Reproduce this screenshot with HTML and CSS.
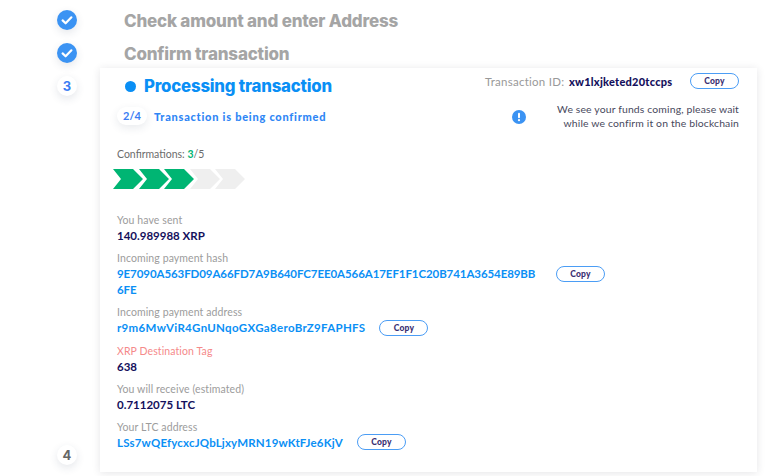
FILE: index.html
```html
<!DOCTYPE html>
<html lang="en">
<head>
  <meta charset="UTF-8" />
  <title>Processing transaction</title>
  <link rel="stylesheet" href="styles.css">
</head>
<body>

  <!-- Finished steps -->
  <div class="step-row">
    <div class="rail">
      <span class="badge badge-done">
        <svg viewBox="0 0 20 20" width="20" height="20"><path d="M5.6 10.4l3 2.9 5.8-6" fill="none" stroke="#fff" stroke-width="2.2" stroke-linecap="round" stroke-linejoin="round"/></svg>
      </span>
    </div>
    <h2 class="step-title">Check amount and enter Address</h2>
  </div>
  <div class="step-row">
    <div class="rail">
      <span class="badge badge-done">
        <svg viewBox="0 0 20 20" width="20" height="20"><path d="M5.6 10.4l3 2.9 5.8-6" fill="none" stroke="#fff" stroke-width="2.2" stroke-linecap="round" stroke-linejoin="round"/></svg>
      </span>
    </div>
    <h2 class="step-title">Confirm transaction</h2>
  </div>

  <!-- Current step -->
  <div class="current">
    <div class="rail rail-long">
      <span class="badge badge-num">3</span>
      <span class="badge badge-num badge-next">4</span>
    </div>

    <div class="card">
      <div class="card-top">
        <div class="card-left">
          <h1 class="title"><span class="dot"></span>Processing transaction</h1>
          <div class="stage">
            <span class="stage-num">2/4</span>
            <span class="stage-text">Transaction is being confirmed</span>
          </div>
        </div>
        <div class="card-right">
          <div class="tx-id">
            <span class="tx-label">Transaction ID:</span>
            <span class="tx-value">xw1lxjketed20tccps</span>
            <button class="copy">Copy</button>
          </div>
          <div class="notice">
            <svg class="notice-icon" viewBox="0 0 14 14" width="14" height="14"><circle cx="7" cy="7" r="7" fill="#3b93f3"/><rect x="6" y="2.8" width="2" height="5.4" rx="1" fill="#fff"/><circle cx="7" cy="10.2" r="1.1" fill="#fff"/></svg>
            <p>We see your funds coming, please wait<br>while we confirm it on the blockchain</p>
          </div>
        </div>
      </div>

      <div class="confirmations">Confirmations: <b>3</b>/5</div>
      <div class="chevrons">
        <svg viewBox="0 0 30 20" width="30" height="20"><polygon class="on" points="0,0 20,0 30,10 20,20 0,20 8,10"/></svg>
        <svg viewBox="0 0 30 20" width="30" height="20"><polygon class="on" points="0,0 20,0 30,10 20,20 0,20 8,10"/></svg>
        <svg viewBox="0 0 30 20" width="30" height="20"><polygon class="on" points="0,0 20,0 30,10 20,20 0,20 8,10"/></svg>
        <svg viewBox="0 0 30 20" width="30" height="20"><polygon points="0,0 20,0 30,10 20,20 0,20 8,10"/></svg>
        <svg viewBox="0 0 30 20" width="30" height="20"><polygon points="0,0 20,0 30,10 20,20 0,20 8,10"/></svg>
      </div>

      <div class="field">
        <div class="label">You have sent</div>
        <div class="value">140.989988 XRP</div>
      </div>
      <div class="field">
        <div class="label">Incoming payment hash</div>
        <div class="value-row value-row-top">
          <div class="value link hash">9E7090A563FD09A66FD7A9B640FC7EE0A566A17EF1F1C20B741A3654E89BB6FE</div>
          <button class="copy">Copy</button>
        </div>
      </div>
      <div class="field">
        <div class="label">Incoming payment address</div>
        <div class="value-row">
          <div class="value link">r9m6MwViR4GnUNqoGXGa8eroBrZ9FAPHFS</div>
          <button class="copy">Copy</button>
        </div>
      </div>
      <div class="field">
        <div class="label label-warn">XRP Destination Tag</div>
        <div class="value">638</div>
      </div>
      <div class="field">
        <div class="label">You will receive (estimated)</div>
        <div class="value">0.7112075 LTC</div>
      </div>
      <div class="field">
        <div class="label">Your LTC address</div>
        <div class="value-row">
          <div class="value link link-ltc">LSs7wQEfycxcJQbLjxyMRN19wKtFJe6KjV</div>
          <button class="copy">Copy</button>
        </div>
      </div>
    </div>
  </div>

</body>
</html>
```

FILE: styles.css
```css
* {
  box-sizing: border-box;
}

body {
  margin: 0;
  background: #fff;
  color: #14105c;
  font-family: 'Lato', sans-serif;
  width: 766px;
  height: 476px;
  overflow: hidden;
  padding-top: 1px;
}

.step-row {
  display: flex;
  align-items: center;
  height: 33px;
  padding-top: 4px;
}

.rail {
  width: 100px;
  padding-left: 57px;
  flex-shrink: 0;
}

.rail-long {
  display: flex;
  flex-direction: column;
  justify-content: space-between;
  padding-top: 8px;
  padding-bottom: 7px;
}

.badge {
  display: flex;
  align-items: center;
  justify-content: center;
  width: 20px;
  height: 20px;
  border-radius: 50%;
  font-family: 'Inter', sans-serif;
  font-size: 13px;
  font-weight: 700;
  box-shadow: 0 3px 8px rgba(40, 60, 90, 0.12);
}

.badge-done {
  background: #3b93f3;
}

.badge-num {
  background: #fff;
  color: #3b7df3;
}

.badge-next {
  color: #666;
}

.step-title {
  margin: 2px 0 0 24px;
  font-family: 'Inter', sans-serif;
  font-size: 17px;
  font-weight: 800;
  letter-spacing: -0.2px;
  color: #a5a5a5;
}

.current {
  display: flex;
  height: 404px;
  margin-top: 1px;
}

.card {
  width: 657px;
  padding: 0 18px 0 17px;
  background: #fff;
  box-shadow: 0 1px 8px rgba(40, 40, 60, 0.12);
}

.card-top {
  display: flex;
  justify-content: space-between;
  height: 74px;
}

.title {
  display: flex;
  align-items: center;
  margin: 8px 0 0 8px;
  font-family: 'Inter', sans-serif;
  font-size: 16.8px;
  font-weight: 800;
  letter-spacing: -0.2px;
  color: #0a8ff5;
}

.dot {
  width: 11px;
  height: 11px;
  border-radius: 50%;
  background: #0a8ff5;
  margin-right: 8px;
}

.stage {
  display: flex;
  align-items: center;
  margin-top: 11px;
}

.stage-num {
  width: 30px;
  height: 18px;
  border-radius: 9px;
  font-size: 11px;
  font-weight: 700;
  line-height: 18px;
  text-align: center;
  color: #3b7df3;
  background: #fff;
  box-shadow: 0 3px 8px rgba(40, 60, 90, 0.1);
}

.stage-text {
  margin-left: 7px;
  font-size: 11px;
  font-weight: 900;
  letter-spacing: 0.75px;
  color: #2f86f5;
}

.card-right {
  width: 254px;
  padding-top: 5px;
}

.tx-id {
  display: flex;
  align-items: center;
  justify-content: space-between;
  font-size: 11px;
  white-space: nowrap;
}

.tx-label {
  color: #999;
  font-size: 11.5px;
  letter-spacing: 0.25px;
}

.tx-value {
  font-weight: 900;
  font-size: 11px;
  letter-spacing: 0.25px;
  margin-right: 13px;
}

.copy {
  width: 49px;
  height: 16px;
  padding: 0;
  border: 1px solid #4b9df5;
  border-radius: 8px;
  background: #fff;
  color: #3a2f72;
  font-family: 'Lato', sans-serif;
  font-size: 8.5px;
  font-weight: 900;
  letter-spacing: 0.2px;
}

.notice {
  display: flex;
  justify-content: space-between;
  align-items: center;
  margin-top: 14px;
  padding-left: 27px;
}

.notice p {
  margin: 0;
  font-size: 10.4px;
  line-height: 13.5px;
  text-align: right;
  color: #47485c;
  letter-spacing: 0.15px;
}

.confirmations {
  margin-top: 6px;
  font-size: 10.5px;
  color: #6b6b6b;
}

.confirmations b {
  color: #00b573;
}

.chevrons {
  display: flex;
  margin: 9px 0 24px -4px;
  height: 20px;
}

.chevrons svg {
  margin-right: -4.5px;
}

.chevrons polygon {
  fill: #efefef;
}

.chevrons polygon.on {
  fill: #00b573;
}

.field {
  margin-bottom: 7.2px;
}

.label {
  font-size: 10.5px;
  line-height: 14px;
  color: #9c9c9c;
  letter-spacing: 0.1px;
}

.label-warn {
  color: #f58a8a;
}

.value {
  font-size: 11.5px;
  font-weight: 700;
  line-height: 16px;
  margin-top: 1px;
}

.value-row {
  display: flex;
  align-items: center;
}

.value-row .copy {
  margin-left: 14px;
}

.value-row-top {
  align-items: flex-start;
}

.value-row-top .copy {
  margin: 1px 0 0 18px;
}

.link {
  color: #0a8ff5;
  letter-spacing: 0.32px;
}

.link-ltc {
  letter-spacing: 0.17px;
}

.hash {
  width: 421px;
  letter-spacing: -0.08px;
  word-break: break-all;
}
```
